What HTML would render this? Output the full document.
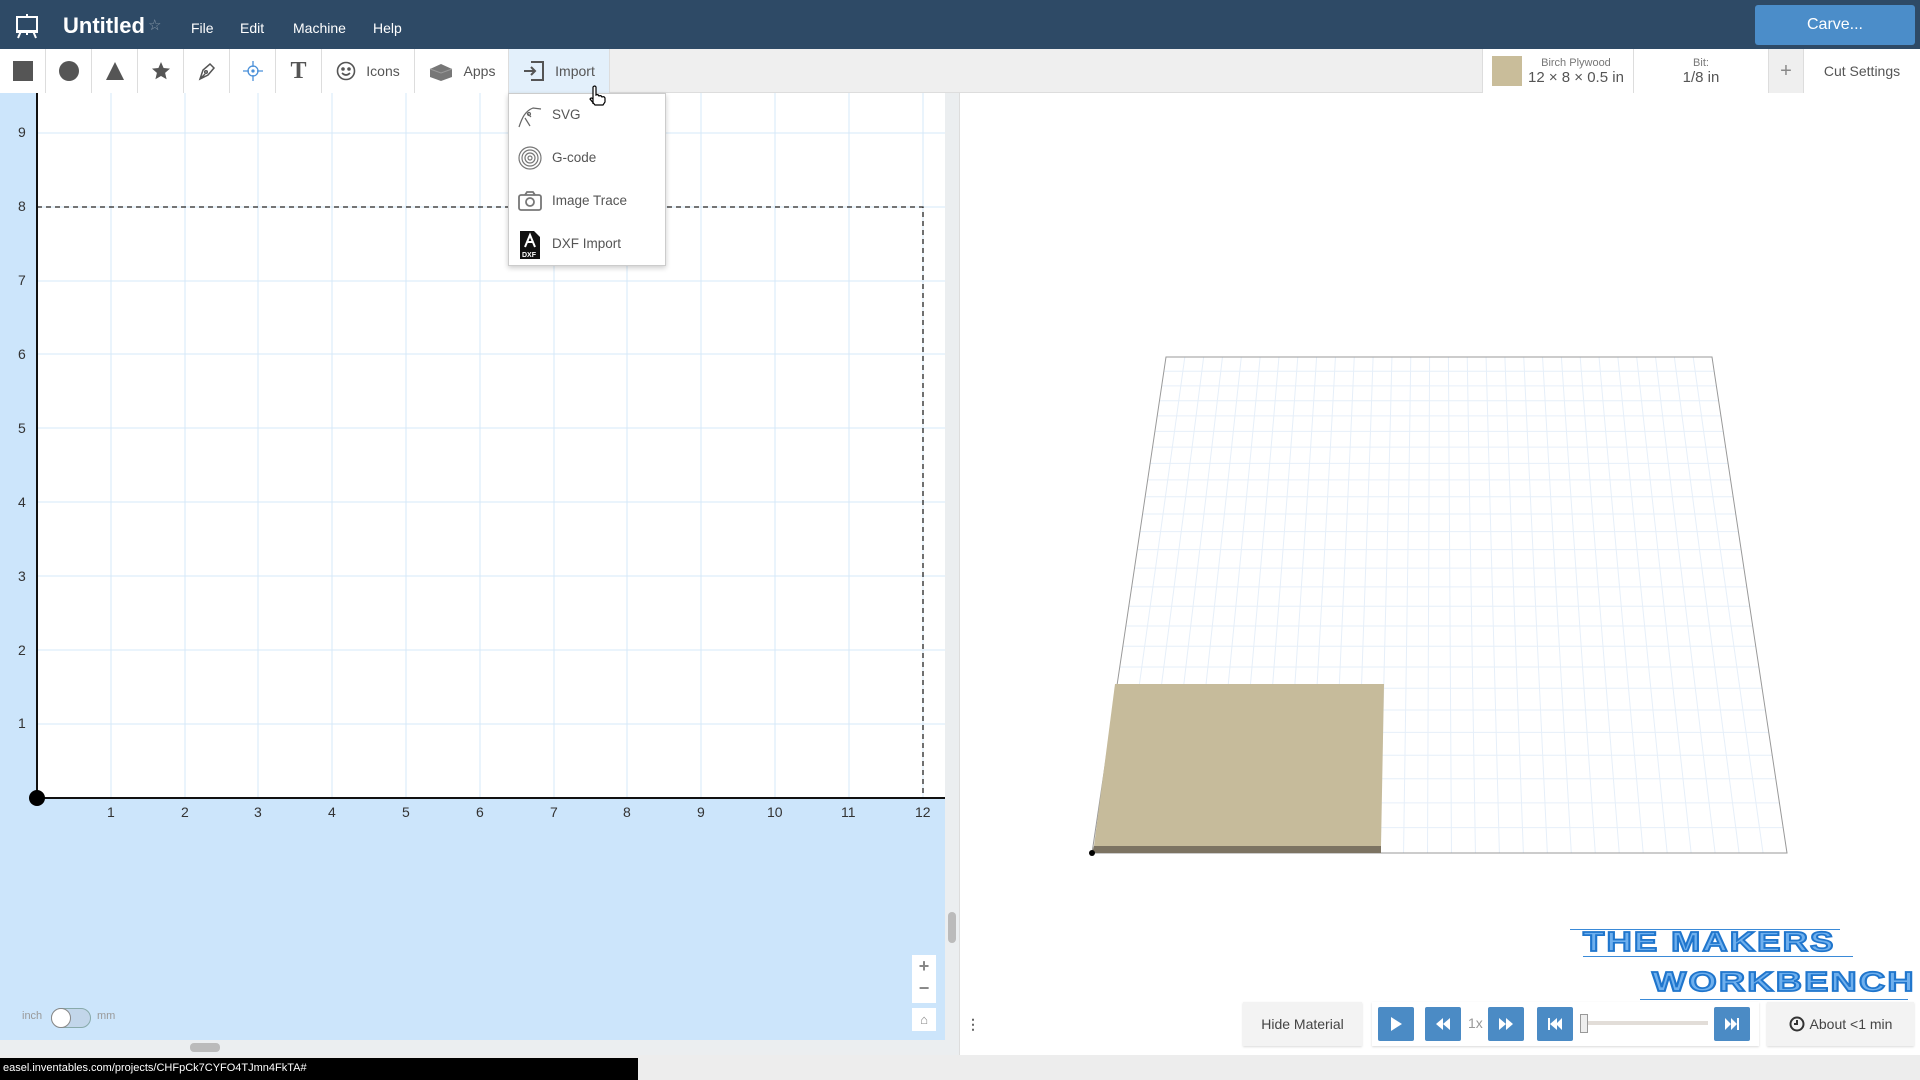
<!DOCTYPE html>
<html><head><meta charset="utf-8"><style>
*{box-sizing:border-box;margin:0;padding:0}
body{width:1920px;height:1080px;overflow:hidden;font-family:"Liberation Sans",sans-serif;background:#fff;position:relative}
.abs{position:absolute}
#hdr{left:0;top:0;width:1920px;height:49px;background:#2e4a66}
.menu{color:#fff;font-size:14px;top:20px}
#tb{left:0;top:49px;width:1920px;height:44px;background:#efefef;border-bottom:1px solid #ddd}
.tbtn{top:0;height:44px;background:#fff;border-right:1px solid #ddd;display:flex;align-items:center;justify-content:center;color:#555;font-size:14px;gap:10px}
.ax{font-size:14px;color:#333}
.dd{font-size:13.5px;color:#555}
.pb{background:#4b8bc5;border-radius:2px;top:1007px;width:36px;height:34px;display:flex;align-items:center;justify-content:center}
.logo{font-size:33px;font-weight:900;color:#6fb0ee;-webkit-text-stroke:2px #1f75cc;letter-spacing:2px;line-height:32px;transform-origin:0 0}
</style></head><body>
<div id="hdr" class="abs">
<svg class="abs" style="left:14px;top:13px" width="26" height="26" viewBox="0 0 26 26" fill="none" stroke="#fff" stroke-width="2"><rect x="3" y="4" width="20" height="14"/><path d="M13 1v3M7 18l-3 7M19 18l3 7M13 18v4M2 19h22"/></svg>
<div class="abs" style="left:63px;top:13px;color:#fff;font-size:22px;font-weight:bold">Untitled</div>
<div class="abs" style="left:148px;top:16px;color:#8a9aaa;font-size:15px">☆</div>
<div class="abs menu" style="left:191px">File</div>
<div class="abs menu" style="left:240px">Edit</div>
<div class="abs menu" style="left:293px">Machine</div>
<div class="abs menu" style="left:373px">Help</div>
<div class="abs" style="left:1755px;top:5px;width:160px;height:40px;background:#4b8dc9;border-radius:3px;color:#fff;font-size:16px;display:flex;align-items:center;justify-content:center">Carve...</div>
</div>
<div id="tb" class="abs">
<div class="abs tbtn" style="left:0;width:46px"><div style="width:20px;height:20px;background:#555"></div></div>
<div class="abs tbtn" style="left:46px;width:46px"><div style="width:20px;height:20px;background:#555;border-radius:50%"></div></div>
<div class="abs tbtn" style="left:92px;width:46px"><svg width="20" height="20"><path d="M10 1L19 19H1Z" fill="#555"/></svg></div>
<div class="abs tbtn" style="left:138px;width:46px"><svg width="20" height="20" viewBox="0 0 20 20"><path d="M10 1l2.6 6 6.4.6-4.9 4.3 1.5 6.4L10 15l-5.6 3.3 1.5-6.4L1 7.6 7.4 7z" fill="#555"/></svg></div>
<div class="abs tbtn" style="left:184px;width:46px"><svg width="20" height="20" viewBox="0 0 20 20" fill="none" stroke="#555" stroke-width="1.5"><path d="M3 18l3-9 7-6 4 4-6 7z M3 18l5-5"/><circle cx="9" cy="11" r="1.3"/></svg></div>
<div class="abs tbtn" style="left:230px;width:46px"><svg width="22" height="22" fill="none" stroke="#4a90d9" stroke-width="1.3"><circle cx="11" cy="11" r="5"/><circle cx="11" cy="11" r="1" fill="#4a90d9"/><path d="M11 1v6M11 15v6M1 11h6M15 11h6"/></svg></div>
<div class="abs tbtn" style="left:276px;width:46px;font-family:'Liberation Serif',serif;font-size:24px;font-weight:bold;color:#555">T</div>
<div class="abs tbtn" style="left:322px;width:93px"><svg width="20" height="20" fill="none" stroke="#555" stroke-width="1.6"><circle cx="10" cy="10" r="8.5"/><circle cx="7" cy="8" r="1" fill="#555"/><circle cx="13" cy="8" r="1" fill="#555"/><path d="M6 12q4 4 8 0"/></svg>Icons</div>
<div class="abs tbtn" style="left:415px;width:94px"><svg width="26" height="20"><path d="M2 8l11-5 11 5v8l-11 4-11-4z" fill="#777"/><path d="M2 8l11 4 11-4" fill="none" stroke="#999"/></svg>Apps</div>
<div class="abs tbtn" style="left:509px;width:101px;background:#e3f0fb"><svg width="22" height="22" fill="none" stroke="#555" stroke-width="2"><path d="M8 2h12v18H8M1 11h11M8 7l4 4-4 4"/></svg>Import</div>
<div class="abs tbtn" style="left:1482px;width:152px;border-left:1px solid #ddd;justify-content:flex-start;padding-left:9px;gap:6px"><div style="width:30px;height:30px;background:#c9bd9a"></div><div style="text-align:center"><div style="font-size:11px;color:#777">Birch Plywood</div><div style="font-size:15px;color:#555">12 × 8 × 0.5 in</div></div></div>
<div class="abs tbtn" style="left:1634px;width:135px;flex-direction:column;gap:0"><div style="font-size:11px;color:#777">Bit:</div><div style="font-size:15px;color:#555">1/8 in</div></div>
<div class="abs tbtn" style="left:1769px;width:35px;background:#efefef;font-size:20px;color:#888">+</div>
<div class="abs tbtn" style="left:1804px;width:116px;border-right:none">Cut Settings</div>
</div>
<!-- left canvas -->
<div class="abs" style="left:0;top:93px;width:945px;height:947px;background:#cce5fb"></div>
<svg class="abs" style="left:0;top:93px" width="945" height="947">
<rect x="37" y="0" width="908" height="705" fill="#fff"/>
<g stroke="#d6e8f8" stroke-width="1">
<path d="M111 0v705M185 0v705M258 0v705M332 0v705M406 0v705M480 0v705M554 0v705M627 0v705M701 0v705M775 0v705M849 0v705M923 0v705"/>
<path d="M37 40h908M37 114h908M37 188h908M37 261h908M37 335h908M37 409h908M37 483h908M37 557h908M37 631h908"/>
</g>
<path d="M37 114H923V705" fill="none" stroke="#222" stroke-width="1.3" stroke-dasharray="5,4"/>
<path d="M37 0V705H945" fill="none" stroke="#111" stroke-width="2"/>
<circle cx="37" cy="705" r="8" fill="#000"/>
</svg>
<div class="abs ax" style="left:18px;top:124px">9</div><div class="abs ax" style="left:18px;top:198px">8</div><div class="abs ax" style="left:18px;top:272px">7</div><div class="abs ax" style="left:18px;top:346px">6</div><div class="abs ax" style="left:18px;top:420px">5</div><div class="abs ax" style="left:18px;top:494px">4</div><div class="abs ax" style="left:18px;top:568px">3</div><div class="abs ax" style="left:18px;top:642px">2</div><div class="abs ax" style="left:18px;top:715px">1</div>
<div class="abs ax" style="left:107px;top:804px">1</div><div class="abs ax" style="left:181px;top:804px">2</div><div class="abs ax" style="left:254px;top:804px">3</div><div class="abs ax" style="left:328px;top:804px">4</div><div class="abs ax" style="left:402px;top:804px">5</div><div class="abs ax" style="left:476px;top:804px">6</div><div class="abs ax" style="left:550px;top:804px">7</div><div class="abs ax" style="left:623px;top:804px">8</div><div class="abs ax" style="left:697px;top:804px">9</div><div class="abs ax" style="left:767px;top:804px">10</div><div class="abs ax" style="left:841px;top:804px">11</div><div class="abs ax" style="left:915px;top:804px">12</div>
<div class="abs" style="left:945px;top:93px;width:14px;height:947px;background:#ebeef0"></div>
<div class="abs" style="left:948px;top:912px;width:8px;height:31px;background:#bbb;border-radius:4px"></div>
<div class="abs" style="left:0;top:1040px;width:960px;height:15px;background:#ebeef0"></div>
<div class="abs" style="left:190px;top:1043px;width:30px;height:9px;background:#bbb;border-radius:4px"></div>
<div class="abs" style="left:959px;top:93px;width:1px;height:962px;background:#ddd"></div>
<div class="abs" style="left:912px;top:955px;width:24px;height:48px;background:#fff;color:#888;font-size:18px;font-weight:bold;text-align:center;line-height:22px">+<br>−</div>
<div class="abs" style="left:912px;top:1008px;width:24px;height:23px;background:#fff;color:#888;font-size:13px;text-align:center;line-height:23px">⌂</div>
<div class="abs" style="left:22px;top:1010px;font-size:11px;color:#999">inch</div>
<div class="abs" style="left:51px;top:1008px;width:40px;height:20px;border-radius:10px;background:#c2d6ea;border:1px solid #8aa"></div>
<div class="abs" style="left:51px;top:1008px;width:20px;height:20px;border-radius:10px;background:#fff;border:1px solid #888"></div>
<div class="abs" style="left:97px;top:1010px;font-size:11px;color:#999">mm</div>
<div class="abs" style="left:966px;top:1016px;color:#666;font-size:14px;font-weight:bold">⋮</div>
<!-- dropdown -->
<div class="abs" style="left:508px;top:93px;width:158px;height:173px;background:#fff;border:1px solid #ccc;box-shadow:0 2px 5px rgba(0,0,0,.2)"></div>
<svg class="abs" style="left:517px;top:103px" width="26" height="26" fill="none" stroke="#666" stroke-width="1.2"><path d="M2 24C5 15 8 8 16 5l8 1M10 10l4 4M8 15l5 8"/><circle cx="12" cy="11" r="1.5"/></svg>
<div class="abs dd" style="left:552px;top:107px">SVG</div>
<svg class="abs" style="left:518px;top:146px" width="24" height="24" fill="none" stroke="#777" stroke-width="1.2"><circle cx="12" cy="12" r="11"/><circle cx="12" cy="12" r="8"/><circle cx="12" cy="12" r="5"/><circle cx="12" cy="12" r="2"/></svg>
<div class="abs dd" style="left:552px;top:150px">G-code</div>
<svg class="abs" style="left:518px;top:190px" width="24" height="22" fill="none" stroke="#777" stroke-width="1.8"><rect x="1" y="5" width="22" height="15" rx="2"/><path d="M7 5l2-3h6l2 3"/><circle cx="12" cy="12" r="4"/></svg>
<div class="abs dd" style="left:552px;top:193px">Image Trace</div>
<svg class="abs" style="left:520px;top:231px" width="20" height="28"><path d="M0 0h14l6 6v22H0z" fill="#111"/><path d="M5 16l5-12 5 12M7 11h6" stroke="#fff" stroke-width="2" fill="none"/><text x="2" y="26" font-size="7" fill="#fff" font-family="Liberation Sans" font-weight="bold">DXF</text></svg>
<div class="abs dd" style="left:552px;top:236px">DXF Import</div>
<svg class="abs" style="left:588px;top:84px" width="18" height="22"><path d="M5 20V3q2-2 3 0v8q2-1 3 1 2-1 3 1 2-1 3 1v4l-2 3H7l-5-6q1-2 3 0z" fill="#fff" stroke="#000" stroke-width="1.2"/></svg>
<!-- 3D view -->
<svg class="abs" style="left:960px;top:93px" width="960" height="962" id="v3">
<g id="grid" stroke="#e6eff9" stroke-width="1"></g>
<path d="M206 264H752L827 760H132Z" fill="none" stroke="#999" stroke-width="1"/>
<path d="M155 591H424L421 753H134Z" fill="#c6bb9b"/>
<path d="M134 753H421V760H132Z" fill="#7c7362"/>
<circle cx="132" cy="760" r="3" fill="#000"/>
</svg>
<script>
(function(){var g=document.getElementById('grid'),s='';
for(var i=1;i<29;i++){var t=206+i*546/29,b=132+i*695/29;s+='<line x1="'+t+'" y1="264" x2="'+b+'" y2="760"/>';}
for(var j=1;j<26;j++){var f=j/26,y=264+496*(f/(1+0.35*(1-f)));var l=206-74*(y-264)/496,r=752+75*(y-264)/496;s+='<line x1="'+l+'" y1="'+y+'" x2="'+r+'" y2="'+y+'"/>';}
g.innerHTML=s;})();
</script>
<!-- logo -->
<div class="abs" style="left:1570px;top:929px;width:270px;height:1px;background:#3a8ad8"></div>
<div class="abs" style="left:1583px;top:956px;width:270px;height:1px;background:#3a8ad8"></div>
<div class="abs" style="left:1640px;top:999px;width:268px;height:1px;background:#3a8ad8"></div>
<div class="abs logo" style="left:1583px;top:928px;transform:scale(1.06,0.85)">THE MAKERS</div>
<div class="abs logo" style="left:1652px;top:968px;transform:scale(1.1,0.85)">WORKBENCH</div>
<!-- controls -->
<div class="abs" style="left:1243px;top:1002px;width:119px;height:44px;background:#f3f3f3;box-shadow:0 1px 2px rgba(0,0,0,.15);font-size:14px;color:#444;display:flex;align-items:center;justify-content:center">Hide Material</div>
<div class="abs" style="left:1372px;top:1002px;width:387px;height:44px;background:#fff;box-shadow:0 1px 2px rgba(0,0,0,.15)"></div>
<div class="abs pb" style="left:1378px"><svg width="12" height="14"><path d="M1 0l11 7-11 7z" fill="#fff"/></svg></div>
<div class="abs pb" style="left:1425px"><svg width="14" height="12"><path d="M7 0v12L0 6zM14 0v12L7 6z" fill="#fff"/></svg></div>
<div class="abs" style="left:1468px;top:1015px;font-size:14px;color:#999">1x</div>
<div class="abs pb" style="left:1488px"><svg width="14" height="12"><path d="M0 0v12l7-6zM7 0v12l7-6z" fill="#fff"/></svg></div>
<div class="abs pb" style="left:1537px"><svg width="14" height="12"><path d="M0 0h2v12H0zM9 0v12L2 6zM14 0v12L8 6z" fill="#fff"/></svg></div>
<div class="abs" style="left:1585px;top:1021px;width:123px;height:4px;background:#e2ddd8"></div>
<div class="abs" style="left:1580px;top:1014px;width:8px;height:19px;background:#eee;border:1px solid #999"></div>
<div class="abs pb" style="left:1714px"><svg width="14" height="12"><path d="M0 0v12l6-6zM6 0v12l6-6zM12 0h2v12h-2z" fill="#fff"/></svg></div>
<div class="abs" style="left:1767px;top:1002px;width:147px;height:44px;background:#f3f3f3;box-shadow:0 1px 2px rgba(0,0,0,.15);font-size:14px;color:#444;display:flex;align-items:center;justify-content:center;gap:5px"><svg width="16" height="16" fill="none" stroke="#333" stroke-width="2"><circle cx="8" cy="8" r="6.5"/><path d="M8 4v4H5"/></svg>About &lt;1 min</div>
<div class="abs" style="left:0;top:1055px;width:1920px;height:25px;background:#ededed"></div>
<div class="abs" style="left:0;top:1058px;width:638px;height:22px;background:#000;color:#fff;font-size:11px;padding:4px 3px">easel.inventables.com/projects/CHFpCk7CYFO4TJmn4FkTA#</div>
</body></html>
